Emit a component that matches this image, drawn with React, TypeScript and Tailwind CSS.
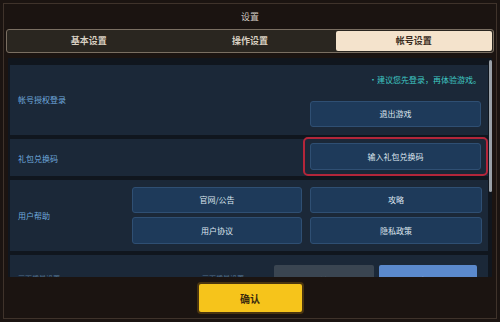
const font = { fontFamily: '"Noto Sans CJK SC", "Noto Sans", sans-serif' };

const tabs = ["基本设置", "操作设置", "帐号设置"];

const Btn = ({ label, className = "" }: { label: string; className?: string }) => (
  <div
    className={`flex items-center justify-center rounded-[3px] border border-[#2f4f73] bg-[#1e3a5a] text-[8px] text-[#dde6ef] ${className}`}
  >
    {label}
  </div>
);

const App = () => {
  return (
    <div className="h-[322px] w-[500px] bg-[#1b1411] p-[3px]" style={font}>
      <div className="flex h-full flex-col border border-[#3f332b]">
        <div className="flex h-[25px] items-center justify-center text-[9px] text-[#cfc8c0]">
          设置
        </div>
        <div className="mx-[2px] grid h-[24px] grid-cols-3 rounded-[3px] border border-[#7a6f62] bg-[#2a2620] p-[1px]">
          {tabs.map((t, i) => (
            <div
              key={t}
              className={`flex items-center justify-center rounded-[2px] text-[9px] font-bold ${
                i === 2 ? "ml-[5px] bg-[#f4e3cc] text-[#3a2c22]" : "text-[#d9d0c2]"
              }`}
            >
              {t}
            </div>
          ))}
        </div>

        <div className="relative mx-[4px] mt-[5px] flex flex-1 flex-col gap-[4px] overflow-hidden bg-[#10161e] pl-[2px] pr-[4px] pt-[7px]">
          <div className="absolute right-0 top-[2px] h-[132px] w-[3px] rounded-full bg-[#9aa1a8]" />

          {/* 帐号授权登录 */}
          <div className="flex h-[70px] shrink-0 items-center bg-[#1b2838] pl-[8px] pr-[7px]">
            <span className="text-[8px] text-[#6fa9dd]">帐号授权登录</span>
            <div className="ml-auto flex flex-col items-end self-stretch pt-[9px]">
              <span className="text-[8px] leading-[12px] text-[#3fc9c3]">•建议您先登录，再体验游戏。</span>
              <Btn label="退出游戏" className="mt-[15px] h-[26px] w-[171px]" />
            </div>
          </div>

          {/* 礼包兑换码 */}
          <div className="flex h-[37px] shrink-0 items-start bg-[#1b2838] pl-[8px] pr-[7px] pt-[4px]">
            <span className="self-center pb-[2px] text-[8px] text-[#6fa9dd]">礼包兑换码</span>
            <div className="relative ml-auto">
              <div className="absolute -bottom-[6px] -left-[7px] -right-[7px] -top-[6px] rounded-[5px] border-2 border-[#b3263a]" />
              <Btn label="输入礼包兑换码" className="h-[27px] w-[171px]" />
            </div>
          </div>

          {/* 用户帮助 */}
          <div className="flex h-[71px] shrink-0 items-center bg-[#1b2838] pl-[8px] pr-[6px]">
            <span className="text-[8px] text-[#6fa9dd]">用户帮助</span>
            <div className="ml-auto grid grid-cols-2 gap-x-[6px] gap-y-[4px]">
              <Btn label="官网/公告" className="h-[26px] w-[170px]" />
              <Btn label="攻略" className="h-[26px] w-[172px]" />
              <Btn label="用户协议" className="h-[27px] w-[170px]" />
              <Btn label="隐私政策" className="h-[27px] w-[172px]" />
            </div>
          </div>

          {/* partially visible row */}
          <div className="flex h-[60px] shrink-0 items-start bg-[#1b2838] pl-[8px] pr-[11px] pt-[10px]">
            <span className="pt-[8px] text-[7px] text-[#4f6d8a]">画面质量设置</span>
            <span className="ml-auto pt-[8px] text-[7px] text-[#4f6d8a]">画面质量设置</span>
            <div className="ml-[30px] flex h-[24px] gap-[5px]">
              <div className="flex w-[100px] items-end justify-center rounded-[2px] bg-[#3a4551] pb-[4px] text-[7px] text-[#8a97a4]">
                流畅
              </div>
              <div className="flex w-[98px] items-end justify-center rounded-[2px] bg-[#5b89cc] pb-[4px] text-[7px] text-[#e6eefa]">
                标准
              </div>
            </div>
          </div>
        </div>

        <div className="flex h-[41px] shrink-0 justify-center pt-[5px]">
          <div className="flex h-[32px] w-[107px] items-center justify-center rounded-[4px] border-2 border-[#4a3510] bg-[#f6c41b] text-[10px] font-bold text-[#3a2a0e]">
            确认
          </div>
        </div>
      </div>
    </div>
  );
};

export default App;
